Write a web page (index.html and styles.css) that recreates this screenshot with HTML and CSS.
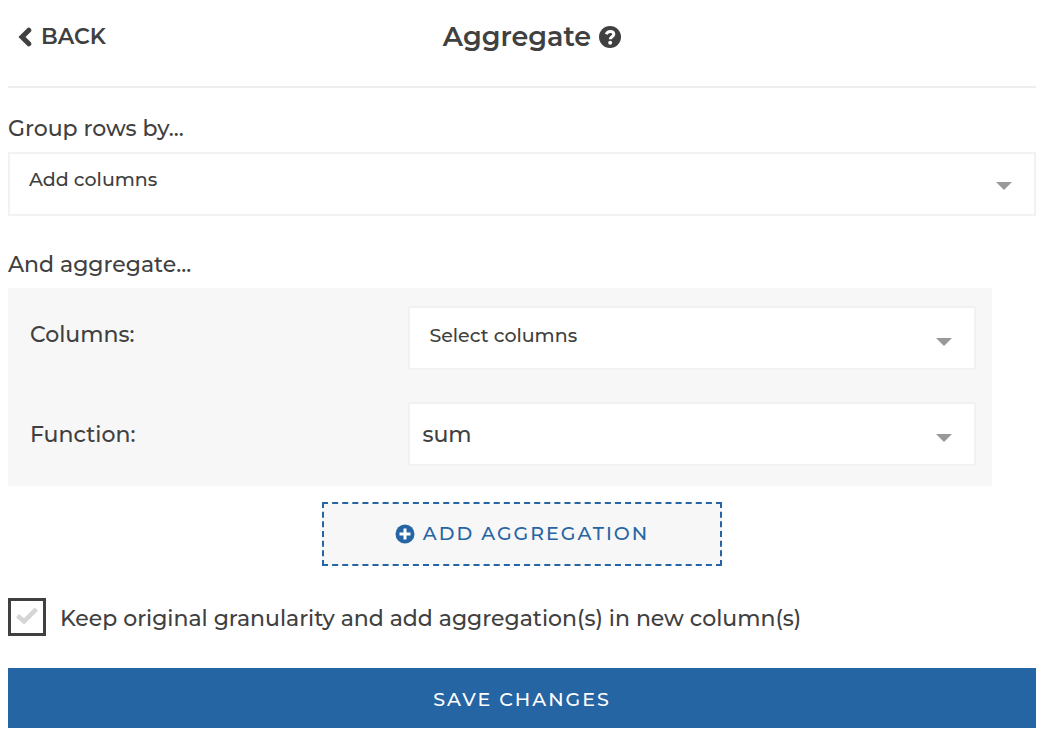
FILE: index.html
```html
<!DOCTYPE html>
<html lang="en">
<head>
<meta charset="utf-8">
<meta name="viewport" content="width=device-width, initial-scale=1">
<title>Aggregate</title>
<link rel="stylesheet" href="styles.css">
</head>
<body>
<form class="step">
  <header class="step-header">
    <button type="button" class="back">
      <svg class="back-icon" viewBox="0 0 14 20" aria-hidden="true"><path d="M10.8 3.2 4 10l6.8 6.8"/></svg>
      BACK
    </button>
    <h1 class="title">
      Aggregate
      <svg class="help-icon" viewBox="0 0 22 22" role="img" aria-label="Help"><circle cx="11" cy="11" r="11"/><path d="M7.2 8.3C8 6.3 9.4 5.4 11.2 5.4c2.1 0 3.6 1.2 3.6 2.9 0 2.5-3.5 2.4-3.5 4.9"/><circle class="help-dot" cx="11.2" cy="16.7" r="2"/></svg>
    </h1>
  </header>

  <section class="group">
    <label class="label" for="group-by">Group rows by...</label>
    <div class="picker">
      <select id="group-by" class="picker-input picker-multi"><option>Add columns</option></select>
    </div>
  </section>

  <section class="aggregate">
    <h2 class="label">And aggregate...</h2>
    <div class="panel">
      <div class="row">
        <label class="row-label" for="columns">Columns:</label>
        <div class="picker">
          <select id="columns" class="picker-input picker-multi"><option>Select columns</option></select>
        </div>
      </div>
      <div class="row">
        <label class="row-label row-label-low" for="function">Function:</label>
        <div class="picker">
          <select id="function" class="picker-input"><option>sum</option></select>
        </div>
      </div>
    </div>
  </section>

  <button type="button" class="add">
    <svg class="add-icon" viewBox="0 0 20 20" aria-hidden="true"><circle cx="10" cy="10" r="9.5"/><path d="M10 4.5v11M4.5 10h11"/></svg>
    ADD AGGREGATION
  </button>

  <label class="keep">
    <span class="check">
      <input type="checkbox" class="check-input">
      <svg class="check-icon" viewBox="0 0 22 17" aria-hidden="true"><path d="M1.6 8.6 8 14.4 20.4 2.2"/></svg>
    </span>
    <span class="keep-text">Keep original granularity and add aggregation(s) in new column(s)</span>
  </label>

  <button type="submit" class="save">SAVE CHANGES</button>
</form>
</body>
</html>
```

FILE: styles.css
```css
* {
  box-sizing: border-box;
}

body {
  margin: 0;
  background: #fff;
  color: #404040;
  font-family: Montserrat, Inter, sans-serif;
  font-size: 22px;
  font-weight: 500;
  line-height: 30px;
}

button,
select {
  font: inherit;
  color: inherit;
  border-radius: 0;
}

.step {
  display: flex;
  flex-direction: column;
  padding: 0 8px 16px;
}

.step-header {
  display: grid;
  grid-template-columns: 1fr auto 1fr;
  align-items: center;
  height: 88px;
  padding: 0 0 12px 20px;
  border-bottom: 2px solid #eee;
}

.back {
  display: flex;
  align-items: center;
  justify-self: start;
  gap: 9px;
  margin-left: -10px;
  padding: 0;
  border: 0;
  background: none;
  font-weight: 600;
}

.back-icon {
  width: 14px;
  height: 20px;
  fill: none;
  stroke: currentColor;
  stroke-width: 5;
  stroke-linecap: round;
}

.title {
  display: flex;
  align-items: center;
  gap: 8px;
  margin: 0;
  font-size: 27px;
  font-weight: 600;
  line-height: 36px;
}

.help-icon {
  width: 22px;
  height: 22px;
  fill: currentColor;
}

.help-icon path {
  fill: none;
  stroke: #fff;
  stroke-width: 3;
}

.help-icon .help-dot {
  fill: #fff;
}

.group {
  margin-top: 26px;
}

.aggregate {
  margin-top: 34px;
}

.label {
  display: block;
  margin: 0 0 8px;
  font-size: 22px;
  font-weight: 500;
  line-height: 30px;
}

.picker {
  position: relative;
}

.picker::after {
  content: "";
  position: absolute;
  top: 30px;
  right: 24px;
  width: 16px;
  height: 8px;
  background: #999;
  clip-path: polygon(0 0, 100% 0, 50% 100%);
  pointer-events: none;
}

.picker-input {
  display: block;
  width: 100%;
  height: 64px;
  padding: 2px 48px 0 12px;
  border: 2px solid #f2f2f2;
  background: #fff;
  appearance: none;
}

.picker-multi {
  padding: 0 48px 8px 19px;
  font-size: 19px;
}

.panel {
  display: grid;
  gap: 32px;
  margin-right: 44px;
  padding: 18px 16px 20px 22px;
  background: #f7f7f7;
}

.panel .picker::after {
  top: 32px;
}

.panel .picker-multi {
  padding-bottom: 4px;
}

.row {
  display: grid;
  grid-template-columns: 2fr 3fr;
  align-items: start;
}

.row-label {
  padding-top: 14px;
}

.row-label-low {
  padding-top: 18px;
}

.add {
  display: flex;
  align-items: center;
  justify-content: center;
  align-self: center;
  gap: 8px;
  width: 400px;
  max-width: 100%;
  height: 64px;
  margin-top: 16px;
  padding: 0;
  border: 2px dashed #2665a3;
  background: #f7f7f7;
  color: #2665a3;
  font-size: 19px;
  letter-spacing: 2px;
}

.add-icon {
  width: 20px;
  height: 20px;
  fill: currentColor;
}

.add-icon path {
  stroke: #fff;
  stroke-width: 3;
}

.keep {
  display: flex;
  align-items: center;
  align-self: start;
  gap: 14px;
  margin-top: 32px;
}

.keep-text {
  padding-top: 3px;
}

.check {
  position: relative;
  flex: none;
  width: 38px;
  height: 38px;
}

.check-input {
  display: block;
  width: 100%;
  height: 100%;
  margin: 0;
  border: 3px solid #404040;
  background: #fff;
  appearance: none;
}

.check-icon {
  position: absolute;
  top: 9px;
  left: 8px;
  width: 22px;
  height: 17px;
  fill: none;
  stroke: #d5d5d5;
  stroke-width: 4.5;
  pointer-events: none;
}

.check-input:checked + .check-icon {
  stroke: #2665a3;
}

.save {
  height: 60px;
  margin-top: 32px;
  padding: 3px 0 0;
  border: 0;
  background: #2665a3;
  color: #fff;
  font-size: 19px;
  letter-spacing: 2px;
}
```
